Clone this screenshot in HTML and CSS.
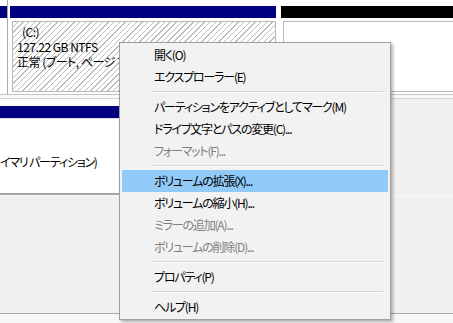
FILE: index.html
```html
<!DOCTYPE html>
<html lang="ja">
<head>
<meta charset="utf-8">
<link rel="stylesheet" href="styles.css">
</head>
<body>
<div class="screen">
  <div class="disk1">
    <div class="part p0"><div class="bar navy"></div></div>
    <div class="part p1">
      <div class="bar navy"></div>
      <div class="pbody hatch">
        <div class="line drive">(C:)</div>
        <div class="line">127.22 GB NTFS</div>
        <div class="line">正常 (ブート, ページ ファイル</div>
      </div>
    </div>
    <div class="part p2">
      <div class="bar black"></div>
      <div class="pbody plain"></div>
    </div>
  </div>
  <div class="sep-strip"></div>
  <div class="disk2">
    <div class="part q1">
      <div class="bar navy"></div>
      <div class="pbody2"><div class="line kana">イマリ パーティション)</div></div>
    </div>
    <div class="q2"></div>
  </div>
  <div class="disk3"></div>
  <div class="footer"></div>
</div>

<div class="menu">
  <div class="item">開く(O)</div>
  <div class="item">エクスプローラー(E)</div>
  <div class="msep"></div>
  <div class="item">パーティションをアクティブとしてマーク(M)</div>
  <div class="item">ドライブ文字とパスの変更(C)...</div>
  <div class="item disabled">フォーマット(F)...</div>
  <div class="msep"></div>
  <div class="item active">ボリュームの拡張(X)...</div>
  <div class="item">ボリュームの縮小(H)...</div>
  <div class="item disabled">ミラーの追加(A)...</div>
  <div class="item disabled">ボリュームの削除(D)...</div>
  <div class="msep"></div>
  <div class="item">プロパティ(P)</div>
  <div class="msep"></div>
  <div class="item">ヘルプ(H)</div>
</div>
</body>
</html>
```

FILE: styles.css
```css
html, body {
  margin: 0;
  padding: 0;
}
body {
  width: 453px;
  height: 323px;
  overflow: hidden;
  position: relative;
  background: #f0f0f0;
  font-family: "Noto Sans CJK JP", "Noto Sans", sans-serif;
  font-feature-settings: "palt";
  font-size: 12px;
  letter-spacing: -0.5px;
  color: #000;
}
.screen {
  display: flex;
  flex-direction: column;
  width: 453px;
  height: 323px;
}
.disk1 {
  display: flex;
  height: 95px;
  padding-top: 6px;
  box-sizing: border-box;
  background: #fff;
  border-bottom: 1px solid #c4c4c4;
}
.part {
  display: flex;
  flex-direction: column;
}
.bar {
  height: 12px;
  flex: none;
}
.navy { background: #000080; }
.black { background: #000; }
.p0 {
  width: 7px;
  border-right: 1px solid #a8a8a8;
  margin-top: -6px;
  padding-top: 6px;
}
.p1 {
  width: 266px;
  margin-left: 2px;
}
.p2 {
  flex: 1;
  margin-left: 5px;
}
.pbody {
  margin-top: 3px;
  margin-left: 2px;
  height: 71px;
  box-sizing: border-box;
  border: 1px solid #b9b9b9;
  overflow: hidden;
}
.p2 .pbody { border-right: none; }
.hatch {
  background: repeating-linear-gradient(135deg, #ffffff 0 3px, #bdbdbd 3px 4px);
  padding: 2px 0 0 4px;
}
.plain { background: #fff; }
.line {
  line-height: 15px;
  white-space: nowrap;
}
.drive { padding-left: 5px; }
.kana { letter-spacing: -1.2px; }
.sep-strip {
  height: 3px;
  background: #f9f9f9;
  border-bottom: 1px solid #d4d4d4;
}
.disk2 {
  display: flex;
  height: 96px;
  background: #fbfbfb;
}
.q1 {
  width: 260px;
  padding-top: 7px;
  border-bottom: 1px solid #a8a8a8;
}
.pbody2 {
  flex: 1;
  background: #fff;
  border-top: 1px solid #e0e0e0;
  border-bottom: 1px solid #a0a0a0;
  padding-top: 35px;
}
.q2 {
  flex: 1;
  background: #f0f0f0;
  border-bottom: 1px solid #e2e2e2;
  margin-bottom: -7px;
}
.disk3 {
  flex: 1;
  background: #f0f0f0;
  border-top: 1px solid #f7f7f7;
  border-bottom: 1px solid #a9a9a9;
}
.footer {
  height: 9px;
  background: #f7f7f7;
}
.menu {
  position: absolute;
  left: 119px;
  top: 42px;
  width: 272px;
  box-sizing: border-box;
  background: #f2f2f2;
  border: 1px solid #a0a0a0;
  padding: 1px 2px;
  box-shadow: 2px 2px 3px rgba(0, 0, 0, 0.3);
  letter-spacing: -1.2px;
}
.item {
  height: 22px;
  line-height: 22px;
  padding-left: 32px;
  white-space: nowrap;
}
.item.disabled { color: #7f7f7f; }
.item.active { background: #91c9f7; }
.msep {
  height: 2px;
  margin: 3px 5px 3px 30px;
  border-top: 1px solid #d7d7d7;
  border-bottom: 1px solid #fff;
  box-sizing: border-box;
}
```
